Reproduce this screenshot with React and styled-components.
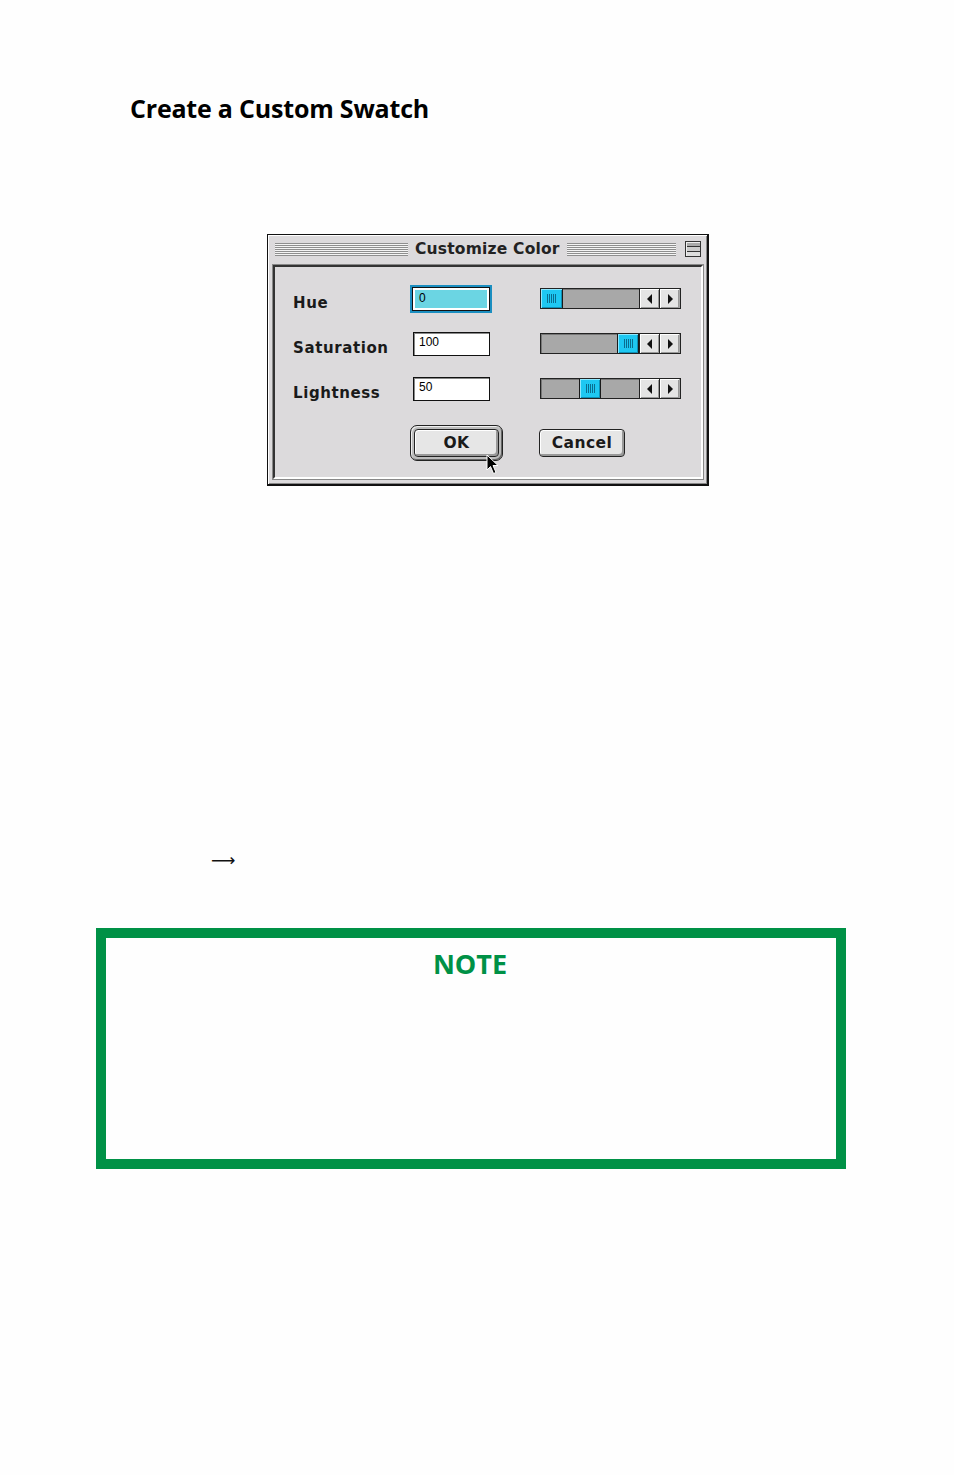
import React from 'react';
import styled, { createGlobalStyle } from 'styled-components';

const GlobalStyle = createGlobalStyle`
  html, body {
    margin: 0;
    padding: 0;
    background: #fefefe;
  }
  body {
    font-family: 'Open Sans', 'Noto Sans', sans-serif;
  }
`;

const Page = styled.div`
  width: 954px;
  min-height: 1475px;
  box-sizing: border-box;
  padding-top: 88px;
  background: #fefefe;
`;

const Heading = styled.h2`
  margin: 0 0 0 130px;
  font-family: 'Open Sans', sans-serif;
  font-weight: 700;
  font-size: 25px;
  line-height: 40px;
  color: #000;
  letter-spacing: -0.2px;
`;

const Figure = styled.div`
  margin: 106px 0 0 267px;
  width: 442px;
`;

/* ---- dialog ---- */

const Dialog = styled.div`
  width: 442px;
  height: 252px;
  box-sizing: border-box;
  background: #dcdadc;
  border: 1px solid #111;
  border-right-width: 2px;
  border-bottom-width: 2px;
  box-shadow: inset 1px 1px 0 #fff, inset -1px -1px 0 #888;
  padding: 2px 4px 5px 5px;
  display: flex;
  flex-direction: column;
`;

const TitleBar = styled.div`
  height: 24px;
  display: flex;
  align-items: center;
  gap: 7px;
  padding: 0 2px 0 2px;
`;

const Stripes = styled.div`
  flex: ${(p) => (p.w ? `0 0 ${p.w}px` : '1')};
  height: 13px;
  background: repeating-linear-gradient(
    to bottom,
    #8e8e8e 0px,
    #8e8e8e 1px,
    #f4f4f4 1px,
    #f4f4f4 2px
  );
`;

const TitleText = styled.span`
  font-family: 'DejaVu Sans', sans-serif;
  font-weight: 700;
  font-size: 15.5px;
  color: #222;
  letter-spacing: 0.2px;
  white-space: nowrap;
`;

const ZoomBox = styled.div`
  width: 14px;
  height: 14px;
  margin-left: 2px;
  border: 1px solid #333;
  background: linear-gradient(
    to bottom,
    #aaa 0 4px,
    #333 4px 5px,
    #ccc 5px 9px,
    #333 9px 10px,
    #ddd 10px
  );
  box-shadow: inset 1px 1px 0 #eee;
`;

const Panel = styled.div`
  flex: 1;
  margin-top: 4px;
  border: 2px solid;
  border-color: #333 #fff #fff #333;
  outline: 1px solid #888;
  padding: 19px 0 0 18px;
  display: flex;
  flex-direction: column;
`;

const Row = styled.div`
  display: flex;
  align-items: center;
  height: 25px;
  margin-bottom: 20px;
`;

const Label = styled.div`
  width: 119px;
  font-family: 'DejaVu Sans', sans-serif;
  font-weight: 700;
  font-size: 15px;
  letter-spacing: 0.6px;
  color: #1a1a1a;
  padding-top: 8px;
`;

const Field = styled.div`
  height: 24px;
  box-sizing: border-box;
  border: 1px solid #111;
  background: ${(p) => (p.focused ? '#6bd5e3' : '#fff')};
  box-shadow: ${(p) =>
    p.focused ? '0 0 0 2px #1b8ec0, inset 0 0 0 2px #fff' : 'inset 1px 1px 0 #888'};
  font-family: 'Liberation Sans', Arial, sans-serif;
  font-size: 12px;
  line-height: 14px;
  padding: ${(p) => (p.focused ? '3px 6px' : '2px 5px')};
  color: #000;
  ${(p) => (p.focused ? 'margin-left: 0; width: 78px;' : 'margin-left: 1px; width: 77px;')}
`;

const Slider = styled.div`
  margin-left: 50px;
  width: 141px;
  height: 21px;
  box-sizing: border-box;
  border: 1px solid #222;
  display: flex;
  background: #a8a8a8;
`;

const Track = styled.div`
  width: 98px;
  display: flex;
  box-shadow: inset 1px 1px 0 #777;
`;

const Thumb = styled.div`
  width: 22px;
  box-sizing: border-box;
  background: #1ec8f2;
  border-left: 1px solid #1a1a1a;
  border-right: 1px solid #1a1a1a;
  box-shadow: inset 1px 1px 0 #8ee8ff, inset -1px -1px 0 #0e8fb5;
  display: flex;
  align-items: center;
  justify-content: center;
  &:first-child {
    border-left: none;
  }
`;

const Grip = styled.div`
  width: 9px;
  height: 9px;
  background: repeating-linear-gradient(
    to right,
    #0a6d8f 0 1px,
    transparent 1px 2px
  );
`;

const ArrowBtn = styled.div`
  width: 20px;
  box-sizing: border-box;
  border-left: 1px solid #222;
  background: #e4e4e4;
  box-shadow: inset 1px 1px 0 #fff, inset -1px -1px 0 #999;
  display: flex;
  align-items: center;
  justify-content: center;
`;

const Buttons = styled.div`
  display: flex;
  align-items: center;
  margin-top: 4px;
  padding-left: 117px;
  gap: 36px;
`;

const DefaultRing = styled.div`
  position: relative;
  padding: 3px;
  border: 1px solid #222;
  border-radius: 7px;
  background: #bcbcbc;
  box-shadow: inset 1px 1px 0 #eee, inset -1px -1px 0 #666;
`;

const Button = styled.div`
  width: ${(p) => p.w}px;
  height: 28px;
  box-sizing: border-box;
  border: 1px solid #222;
  border-radius: 4px;
  background: #e6e6e6;
  box-shadow: inset 1px 1px 0 #fff, inset -2px -2px 0 #999;
  display: flex;
  align-items: center;
  justify-content: center;
  font-family: 'DejaVu Sans', sans-serif;
  font-weight: 700;
  font-size: 15.5px;
  letter-spacing: 0.4px;
  color: #1a1a1a;
`;

const Cursor = styled.svg`
  position: absolute;
  left: 75px;
  top: 28px;
`;

/* ---- body ---- */

const ArrowLine = styled.div`
  margin: 362px 0 0 211px;
  font-family: 'DejaVu Sans', sans-serif;
  font-size: 17px;
  line-height: 24px;
  color: #111;
`;

const Note = styled.div`
  margin: 56px 0 0 96px;
  width: 750px;
  height: 241px;
  box-sizing: border-box;
  border: 10px solid #009146;
  padding-top: 8px;
`;

const NoteTitle = styled.div`
  text-align: center;
  font-family: 'Open Sans', sans-serif;
  font-weight: 700;
  font-size: 27px;
  line-height: 36px;
  color: #009146;
  margin-right: 2px;
`;

const Tri = ({ dir }) => (
  <svg width="6" height="10" viewBox="0 0 6 10">
    {dir === 'left' ? (
      <polygon points="5,0 5,10 0,5" fill="#111" />
    ) : (
      <polygon points="1,0 1,10 6,5" fill="#111" />
    )}
  </svg>
);

const ScrollSlider = ({ pos }) => {
  const before = Math.round(pos * 76);
  return (
    <Slider>
      <Track>
        {before > 0 && <div style={{ width: before }} />}
        <Thumb>
          <Grip />
        </Thumb>
      </Track>
      <ArrowBtn>
        <Tri dir="left" />
      </ArrowBtn>
      <ArrowBtn>
        <Tri dir="right" />
      </ArrowBtn>
    </Slider>
  );
};

const rows = [
  { label: 'Hue', value: '0', pos: 0, focused: true },
  { label: 'Saturation', value: '100', pos: 1 },
  { label: 'Lightness', value: '50', pos: 0.5 },
];

export default function App() {
  return (
    <>
      <GlobalStyle />
      <Page>
        <Heading>Create a Custom Swatch</Heading>
        <Figure>
          <Dialog>
            <TitleBar>
              <Stripes w={133} />
              <TitleText>Customize Color</TitleText>
              <Stripes />
              <ZoomBox />
            </TitleBar>
            <Panel>
              {rows.map((r) => (
                <Row key={r.label}>
                  <Label>{r.label}</Label>
                  <Field focused={r.focused}>{r.value}</Field>
                  <ScrollSlider pos={r.pos} />
                </Row>
              ))}
              <Buttons>
                <DefaultRing>
                  <Button w={85}>OK</Button>
                  <Cursor width="14" height="22" viewBox="0 0 14 22">
                    <path
                      d="M1 1 L1 16 L4.5 12.5 L7.5 19.5 L10 18.5 L7 11.5 L12 11.5 Z"
                      fill="#000"
                      stroke="#fff"
                      strokeWidth="1"
                    />
                  </Cursor>
                </DefaultRing>
                <Button w={86}>Cancel</Button>
              </Buttons>
            </Panel>
          </Dialog>
        </Figure>
        <ArrowLine>⟶</ArrowLine>
        <Note>
          <NoteTitle>NOTE</NoteTitle>
        </Note>
      </Page>
    </>
  );
}
